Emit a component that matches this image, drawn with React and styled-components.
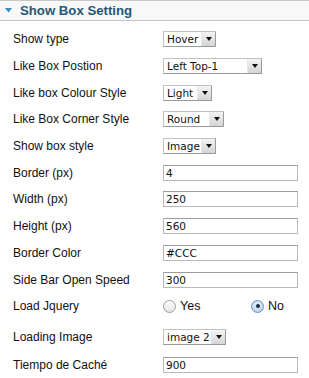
import React, { useState } from 'react';
import styled, { createGlobalStyle } from 'styled-components';

const GlobalStyle = createGlobalStyle`
  html, body {
    margin: 0;
    padding: 0;
    background: #ffffff;
  }
  body {
    font-family: "Liberation Sans", Arial, sans-serif;
  }
`;

const Panel = styled.div`
  width: 309px;
  height: 378px;
  overflow: hidden;
  background: #ffffff;
`;

const Header = styled.div`
  display: flex;
  align-items: center;
  gap: 8px;
  height: 19px;
  padding-left: 5px;
  border-top: 1px solid #c9c9c9;
  border-bottom: 1px solid #c4c4c4;
  background: #f8f8f8;
`;

const Title = styled.h3`
  margin: 0;
  font-size: 13.2px;
  font-weight: bold;
  color: #22597a;
`;

const Rows = styled.div`
  padding: 5px 0 0 13px;
`;

const Row = styled.div`
  display: grid;
  grid-template-columns: 150px 1fr;
  align-items: center;
  height: ${(p) => p.$h || 26.7}px;
  margin-top: ${(p) => p.$mt || 0}px;
`;

const Label = styled.span`
  font-size: 12px;
  color: #111;
`;

const SelectBox = styled.div`
  display: flex;
  align-items: stretch;
  width: ${(p) => p.$w}px;
  height: 16px;
  box-sizing: border-box;
  border: 1px solid #c2c2c2;
  border-right-color: #9a9a9a;
  border-bottom-color: #9a9a9a;
  background: #fff;
`;

const SelectText = styled.span`
  flex: 1;
  padding-left: 3px;
  font-family: "DejaVu Sans", sans-serif;
  font-size: 10.5px;
  line-height: 14px;
  color: #111;
  white-space: nowrap;
`;

const SelectButton = styled.span`
  display: flex;
  align-items: center;
  justify-content: center;
  width: 13px;
  background: linear-gradient(#f4f4f4, #d4d4d4);
  border-left: 1px solid #e6e6e6;
`;

const Arrow = styled.span`
  width: 0;
  height: 0;
  border-left: 3px solid transparent;
  border-right: 3px solid transparent;
  border-top: 4px solid #111;
`;

const TextInput = styled.input`
  width: 135px;
  height: 16px;
  box-sizing: border-box;
  margin: 0;
  padding: 0 2px;
  border: 1px solid #b8b8b8;
  border-top-color: #9c9c9c;
  font-family: "DejaVu Sans", sans-serif;
  font-size: 10.5px;
  color: #111;
  outline: none;
`;

const RadioGroup = styled.div`
  display: flex;
  align-items: center;
`;

const RadioLabel = styled.label`
  display: flex;
  align-items: center;
  gap: 4px;
  width: ${(p) => p.$w}px;
  font-size: 12.5px;
  color: #111;
  cursor: pointer;
`;

const RadioCircle = styled.span`
  display: flex;
  align-items: center;
  justify-content: center;
  width: 13px;
  height: 13px;
  box-sizing: border-box;
  border-radius: 50%;
  border: 1px solid ${(p) => (p.$on ? '#6c8fb5' : '#9a9a9a')};
  background: ${(p) =>
    p.$on
      ? 'radial-gradient(circle at 50% 35%, #e9f3fc, #a9c9ea)'
      : 'linear-gradient(#ffffff, #e4e4e4)'};
`;

const Dot = styled.span`
  width: 4px;
  height: 4px;
  border-radius: 50%;
  background: #1d2a3a;
`;

const Select = ({ w, value }) => (
  <SelectBox $w={w}>
    <SelectText>{value}</SelectText>
    <SelectButton>
      <Arrow />
    </SelectButton>
  </SelectBox>
);

const Toggle = () => (
  <svg width="7" height="5" viewBox="0 0 7 5">
    <polygon points="0,0 7,0 3.5,4.5" fill="#3c8cc2" />
  </svg>
);

const App = () => {
  const [jquery, setJquery] = useState('no');

  return (
    <Panel>
      <GlobalStyle />
      <Header>
        <Toggle />
        <Title>Show Box Setting</Title>
      </Header>
      <Rows>
        <Row>
          <Label>Show type</Label>
          <Select w={53} value="Hover" />
        </Row>
        <Row>
          <Label>Like Box Postion</Label>
          <Select w={99} value="Left Top-1" />
        </Row>
        <Row>
          <Label>Like box Colour Style</Label>
          <Select w={49} value="Light" />
        </Row>
        <Row>
          <Label>Like Box Corner Style</Label>
          <Select w={61} value="Round" />
        </Row>
        <Row>
          <Label>Show box style</Label>
          <Select w={53} value="Image" />
        </Row>
        <Row>
          <Label>Border (px)</Label>
          <TextInput defaultValue="4" />
        </Row>
        <Row>
          <Label>Width (px)</Label>
          <TextInput defaultValue="250" />
        </Row>
        <Row>
          <Label>Height (px)</Label>
          <TextInput defaultValue="560" />
        </Row>
        <Row>
          <Label>Border Color</Label>
          <TextInput defaultValue="#CCC" />
        </Row>
        <Row>
          <Label>Side Bar Open Speed</Label>
          <TextInput defaultValue="300" />
        </Row>
        <Row $h={27}>
          <Label>Load Jquery</Label>
          <RadioGroup>
            <RadioLabel $w={88} onClick={() => setJquery('yes')}>
              <RadioCircle $on={jquery === 'yes'}>{jquery === 'yes' && <Dot />}</RadioCircle>
              Yes
            </RadioLabel>
            <RadioLabel $w={40} onClick={() => setJquery('no')}>
              <RadioCircle $on={jquery === 'no'}>{jquery === 'no' && <Dot />}</RadioCircle>
              No
            </RadioLabel>
          </RadioGroup>
        </Row>
        <Row $h={27} $mt={4}>
          <Label>Loading Image</Label>
          <Select w={63} value="image 2" />
        </Row>
        <Row $h={29}>
          <Label>Tiempo de Caché</Label>
          <TextInput defaultValue="900" />
        </Row>
      </Rows>
    </Panel>
  );
};

export default App;
